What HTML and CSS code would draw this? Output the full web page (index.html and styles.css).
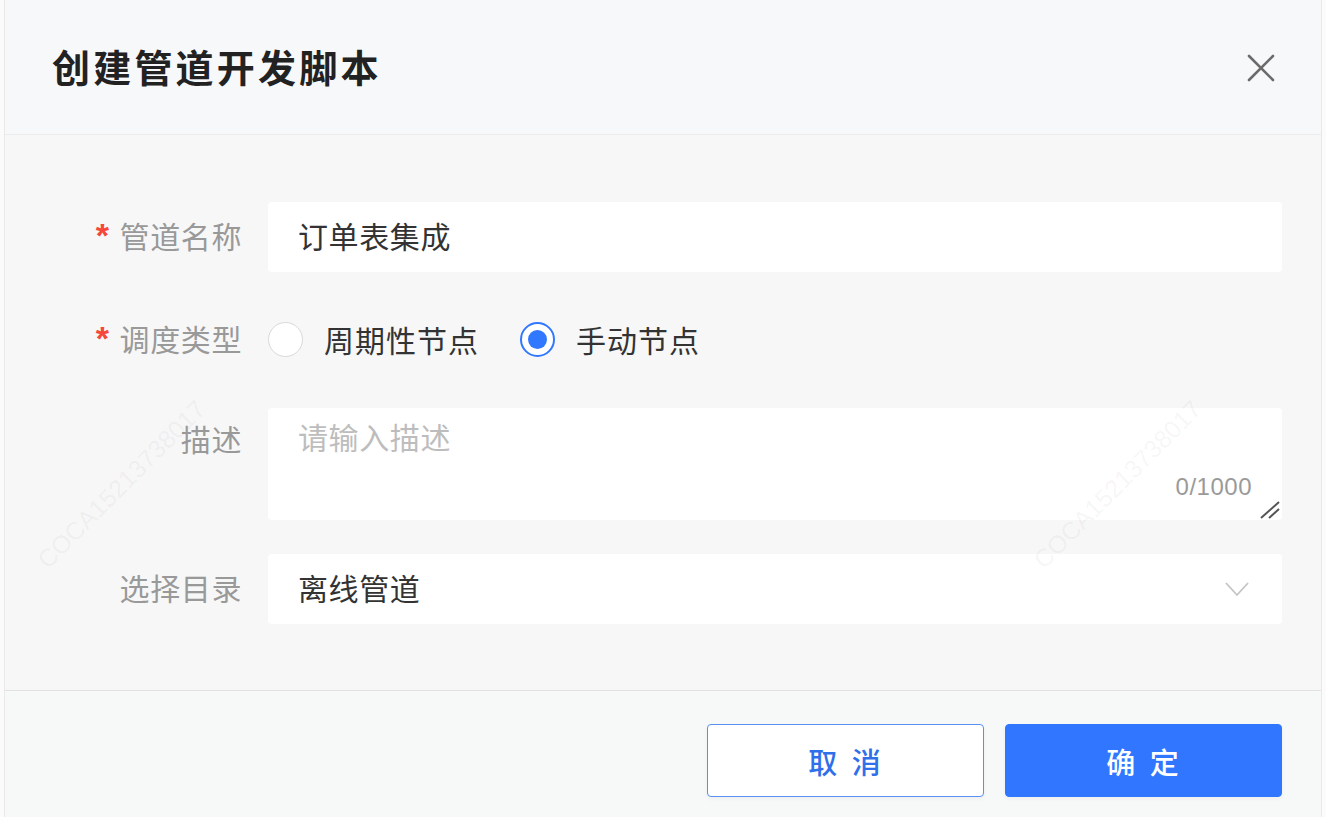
FILE: index.html
```html
<!DOCTYPE html>
<html lang="zh-CN">
	<head>
		<meta charset="utf-8">
		<title>创建管道开发脚本</title>
		<link rel="stylesheet" href="styles.css">
	</head>
	<body>
		<div class="dialog">
			<div class="dialog-header">
				<h2 class="dialog-title">创建管道开发脚本</h2>
				<span class="dialog-close">
					<svg width="28" height="28" viewBox="0 0 28 28"><path d="M2 2 L26 26 M26 2 L2 26" stroke="#6b6b6b" stroke-width="2.6" fill="none" stroke-linecap="round"/></svg>
				</span>
			</div>

			<div class="dialog-body">
				<form class="form">
					<label class="form-label"><span class="required">*</span>管道名称</label>
					<div class="field input">订单表集成</div>

					<label class="form-label"><span class="required">*</span>调度类型</label>
					<div class="radio-group">
						<span class="radio"><span class="radio-dot"></span>周期性节点</span>
						<span class="radio checked"><span class="radio-dot"></span>手动节点</span>
					</div>

					<label class="form-label top">描述</label>
					<div class="field textarea-wrap">
						<textarea class="textarea" placeholder="请输入描述"></textarea>
						<span class="count">0/1000</span>
						<svg class="resize" width="22" height="20" viewBox="0 0 22 20"><path d="M2 19 L20 3 M10 19 L20 10" stroke="#555" stroke-width="2" fill="none"/></svg>
					</div>

					<label class="form-label">选择目录</label>
					<div class="field input select">
						<span>离线管道</span>
						<svg width="26" height="18" viewBox="0 0 26 18"><path d="M2 3 L13 15 L24 3" stroke="#c4c4c4" stroke-width="1.8" fill="none"/></svg>
					</div>
				</form>
			</div>

			<div class="dialog-footer">
				<button class="btn btn-default">取 消</button>
				<button class="btn btn-primary">确 定</button>
			</div>

			<span class="watermark wm-left">COCA15213738017</span>
			<span class="watermark wm-right">COCA15213738017</span>
		</div>
	</body>
</html>
```

FILE: styles.css
```css
* {
	box-sizing: border-box;
}
html, body {
	margin: 0;
	height: 100%;
	background-color: #fbfbfb;
}
body {
	padding: 0 4px;
	font-family: "Noto Sans CJK SC", "Noto Sans", sans-serif;
	color: #333;
}
.dialog {
	position: relative;
	height: 817px;
	background-color: #f7f7f7;
	border-left: 1px solid #e9e9e9;
	border-right: 1px solid #e9e9e9;
	overflow: hidden;
}
.dialog-header {
	height: 135px;
	display: flex;
	align-items: center;
	justify-content: space-between;
	padding: 0 46px 4px 47px;
	background-color: #f7f8fa;
	border-bottom: 1px solid #ececec;
}
.dialog-title {
	margin: 0;
	font-size: 38px;
	font-weight: 700;
	color: #222;
	letter-spacing: 3.2px;
}
.dialog-close {
	display: flex;
	margin-top: 6px;
}
.dialog-body {
	padding: 67px 39px 66px 0;
}
.form {
	display: grid;
	grid-template-columns: 237px 1fr;
	column-gap: 26px;
	row-gap: 34px;
	margin: 0;
}
.form-label {
	display: flex;
	align-items: center;
	justify-content: flex-end;
	font-size: 30px;
	color: #999;
	letter-spacing: 0.6px;
	padding-bottom: 5px;
}
.form-label.top {
	align-items: flex-start;
	padding: 8px 0 0;
}
.required {
	color: #f5483b;
	margin-right: 10px;
	font-family: "Liberation Sans", sans-serif;
	font-size: 34px;
	font-weight: 700;
	position: relative;
	top: 1px;
}
.field {
	background-color: #fff;
	border-radius: 4px;
}
.input {
	height: 70px;
	display: flex;
	align-items: center;
	padding: 0 32px 5px 30px;
	font-size: 30px;
	color: #333;
	letter-spacing: 0.6px;
}
.select {
	justify-content: space-between;
}
.select svg {
	margin-top: 4px;
}
.radio-group {
	display: flex;
	align-items: center;
	height: 68px;
	font-size: 30px;
	color: #333;
	letter-spacing: 1px;
}
.radio {
	display: flex;
	align-items: center;
	margin-right: 41px;
	padding-bottom: 2px;
}
.radio-dot {
	width: 35px;
	height: 35px;
	border-radius: 50%;
	border: 1.5px solid #d9d9d9;
	background-color: #fff;
	margin-right: 21px;
	display: flex;
	align-items: center;
	justify-content: center;
}
.radio.checked .radio-dot {
	border: 2px solid #3078ff;
}
.radio.checked .radio-dot::after {
	content: "";
	width: 19px;
	height: 19px;
	border-radius: 50%;
	background-color: #3078ff;
}
.textarea-wrap {
	position: relative;
	height: 112px;
}
.textarea {
	display: block;
	width: 100%;
	height: 100%;
	border: none;
	outline: none;
	resize: none;
	background: transparent;
	padding: 8px 30px;
	font-family: "Noto Sans CJK SC", sans-serif;
	font-size: 30px;
	line-height: 40px;
	letter-spacing: 0.6px;
	color: #333;
}
.textarea::placeholder {
	color: #bdbdbd;
}
.count {
	position: absolute;
	right: 30px;
	bottom: 19px;
	font-family: "Liberation Sans", "Noto Sans", sans-serif;
	font-size: 24px;
	letter-spacing: 0.5px;
	color: #9a9a9a;
}
.resize {
	position: absolute;
	right: 1px;
	bottom: 1px;
}
.dialog-footer {
	border-top: 1px solid #e2e2e2;
	display: flex;
	justify-content: flex-end;
	gap: 21px;
	padding: 33px 39px 0 0;
	background-color: #f7f8f8;
	height: 127px;
}
.btn {
	width: 277px;
	height: 73px;
	border-radius: 4px;
	font-family: "Noto Sans CJK SC", sans-serif;
	font-size: 29px;
	font-weight: 500;
	letter-spacing: 4px;
	padding-left: 8px;
	cursor: pointer;
	box-shadow: 0 2px 4px rgba(0, 0, 0, 0.04);
}
.btn-default {
	background-color: #fff;
	border: 1.5px solid #5b8ff2;
	color: #2f6fe9;
}
.btn-primary {
	background-color: #3076ff;
	border: 1.5px solid #3076ff;
	color: #fff;
}
.watermark {
	position: absolute;
	font-family: "Liberation Sans", sans-serif;
	font-size: 25px;
	color: rgba(0, 0, 0, 0.05);
	transform: rotate(-45deg);
	white-space: nowrap;
	pointer-events: none;
}
.wm-left {
	left: 4px;
	top: 470px;
}
.wm-right {
	left: 1000px;
	top: 470px;
}
```
